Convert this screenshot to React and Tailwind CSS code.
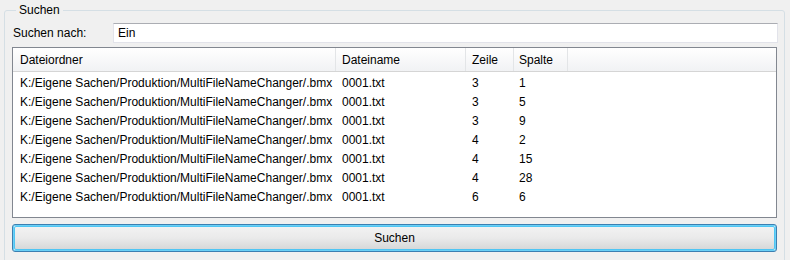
import React from "react";

const rows = [
  ["3", "1"],
  ["3", "5"],
  ["3", "9"],
  ["4", "2"],
  ["4", "15"],
  ["4", "28"],
  ["6", "6"],
];

export default function App() {
  const font = { fontFamily: '"Segoe UI", "Liberation Sans", Arial, sans-serif' };
  return (
    <div className="w-[790px] h-[260px] bg-[#f0f0f0] overflow-hidden text-[12px] text-black" style={font}>
      <fieldset className="ml-[4px] mt-[4px] w-[781px] h-[300px] border border-[#d5dfe5] rounded-[3px] px-[7px]">
        <legend className="ml-[4px] px-[3px] leading-[12px] text-[#000]">Suchen</legend>
        <div className="flex items-center mt-[7px] h-[20px]">
          <span className="w-[101px] pl-[1px]">Suchen nach:</span>
          <div className="flex-1 h-[20px] mr-[-1px] bg-white border border-[#e2e3ea] border-t-[#abadb3] flex items-center pl-[4px]">
            Ein
          </div>
        </div>
        <div className="mt-[4px] h-[171px] bg-white border border-[#828790]">
          <div className="flex h-[24px] bg-gradient-to-b from-white to-[#f1f2f4] border-b border-[#d5d5d5]">
            <div className="w-[323px] pl-[7px] flex items-center border-r border-[#e3e5e7]">Dateiordner</div>
            <div className="w-[130px] pl-[6px] flex items-center border-r border-[#e3e5e7]">Dateiname</div>
            <div className="w-[48px] pl-[6px] flex items-center border-r border-[#e3e5e7]">Zeile</div>
            <div className="w-[54px] pl-[5px] flex items-center border-r border-[#e3e5e7]">Spalte</div>
            <div className="flex-1" />
          </div>
          <div className="pt-[1px]">
            {rows.map((r, i) => (
              <div key={i} className="flex h-[19px] items-center">
                <div className="w-[323px] pl-[7px] whitespace-nowrap">K:/Eigene Sachen/Produktion/MultiFileNameChanger/.bmx</div>
                <div className="w-[130px] pl-[6px]">0001.txt</div>
                <div className="w-[48px] pl-[6px]">{r[0]}</div>
                <div className="w-[54px] pl-[5px]">{r[1]}</div>
              </div>
            ))}
          </div>
        </div>
        <div className="mt-[6px] h-[28px] rounded-[3px] border border-[#3c7fb1] p-[1px] shadow-[0_0_0_1px_#6ad0f6_inset]">
          <div className="h-full rounded-[2px] bg-gradient-to-b from-[#f2f2f2] via-[#eaeaea] to-[#d6d8d9] flex items-center justify-center border border-[#4fc5f3]">
            Suchen
          </div>
        </div>
      </fieldset>
    </div>
  );
}
